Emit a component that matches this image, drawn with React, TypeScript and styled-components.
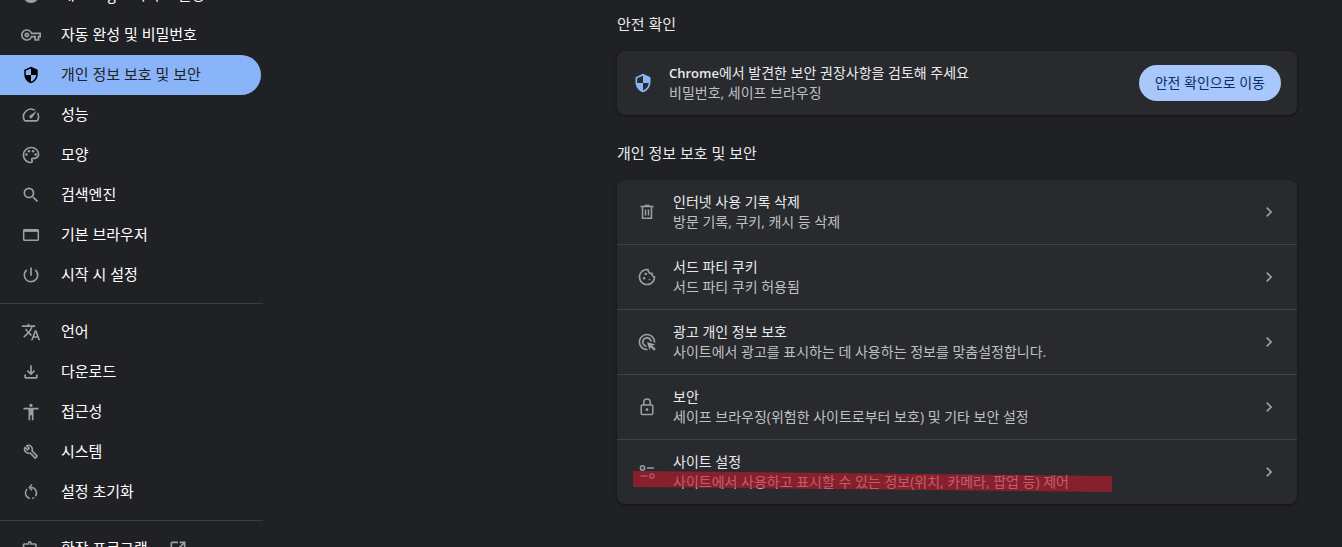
import React from 'react';
import styled, { createGlobalStyle } from 'styled-components';
import {
  MdOutlineVpnKey, MdSecurity, MdOutlinePalette, MdSearch, MdPowerSettingsNew, MdTranslate,
  MdOutlineFileDownload, MdAccessibility, MdOutlineExtension, MdOpenInNew,
  MdOutlineCookie, MdAdsClick, MdChevronRight, MdOutlineSpeed,
} from 'react-icons/md';

const GlobalStyle = createGlobalStyle`
  * { box-sizing: border-box; }
  body {
    margin: 0;
    background: #202124;
    color: #e8eaed;
    font-family: "Open Sans", "Noto Sans CJK KR", sans-serif;
    font-size: 14px;
    line-height: 20px;
  }
`;

const Page = styled.div`
  display: flex;
  justify-content: space-between;
  height: 100vh;
  overflow: hidden;
`;

const Sidebar = styled.nav`
  width: 263px;
  flex: none;
  margin-top: -25px;
`;

const NavGroup = styled.div`
  padding-bottom: 8px;
  & + & {
    border-top: 1px solid #3c3d40;
    padding-top: 8px;
  }
`;

const NavItem = styled.a<{ $selected?: boolean }>`
  display: flex;
  align-items: center;
  gap: 20px;
  height: 40px;
  margin-right: 2px;
  padding-left: 21px;
  border-radius: 0 20px 20px 0;
  background: ${p => (p.$selected ? '#8ab4f8' : 'transparent')};
  color: ${p => (p.$selected ? '#202124' : '#ffffff')};
  font-size: 15px;
  text-decoration: none;
  white-space: nowrap;
`;

const NavLabel = styled.span`
  padding-bottom: 2px;
`;

const IconSlot = styled.span<{ $color?: string }>`
  display: flex;
  flex: none;
  align-items: center;
  justify-content: center;
  width: 20px;
  height: 20px;
  color: ${p => p.$color ?? '#9aa0a6'};
`;

const Main = styled.main`
  flex: 0 1 680px;
  min-width: 0;
  margin-right: 45px;
  padding-top: 12px;
`;

const Section = styled.section`
  margin-bottom: 26px;
`;

const Heading = styled.h2`
  margin: 0 0 15px;
  font-size: 15px;
  font-weight: 400;
  line-height: 24px;
`;

const Card = styled.div`
  border-radius: 8px;
  background: #292a2d;
  box-shadow: 0 1px 2px rgba(0, 0, 0, 0.3), 0 1px 3px 1px rgba(0, 0, 0, 0.15);
`;

const SafetyRow = styled.div`
  display: flex;
  align-items: center;
  gap: 16px;
  height: 64px;
  padding: 0 16px;
`;

const SettingRow = styled.a`
  position: relative;
  display: flex;
  align-items: center;
  gap: 16px;
  height: 64px;
  padding: 0 18px 0 20px;
  color: inherit;
  text-decoration: none;
  & + & {
    height: 65px;
    border-top: 1px solid #414246;
  }
`;

const Labels = styled.div`
  flex: 1;
  min-width: 0;
`;

const Title = styled.div`
  color: #e8eaed;
`;

const Detail = styled.div`
  color: #bdc1c6;
`;

const Brand = styled.strong`
  font-size: 13px;
  font-weight: 600;
`;

const PillButton = styled.button`
  height: 36px;
  padding: 0 16px;
  border: 0;
  border-radius: 18px;
  background: #a8c7fa;
  color: #062e6f;
  font: inherit;
  white-space: nowrap;
`;

const Marker = styled.svg`
  position: absolute;
  left: 15px;
  top: 30px;
  width: 481px;
  height: 24px;
  pointer-events: none;
`;

const LineIcon = ({ children }: { children: React.ReactNode }) => (
  <svg width="20" height="20" viewBox="0 0 20 20" fill="none" stroke="currentColor" strokeWidth="1.5" aria-hidden="true">
    {children}
  </svg>
);

const GoogleIcon = () => (
  <LineIcon><circle cx="10" cy="10" r="8" fill="currentColor" stroke="none" /></LineIcon>
);
const WindowIcon = () => (
  <LineIcon>
    <rect x="2.7" y="4.7" width="14.6" height="10.6" rx="0.8" />
    <path d="M2.7 5.7h14.6" strokeWidth="2.4" />
  </LineIcon>
);
const WrenchIcon = () => (
  <LineIcon>
    <path d="M4 5.3 6.6 7.9 8.2 6.3 5.6 3.7A4 4 0 0 1 11 8.9l5.2 5.2-2 2L9 10.9A4 4 0 0 1 4 5.3z" strokeLinejoin="round" />
  </LineIcon>
);
const ResetIcon = () => (
  <LineIcon>
    <path d="M9.6 5.5a5.5 5.5 0 0 1 4.9 8.7M13.2 15.5a5.5 5.5 0 0 1-2 .9M8.8 16.4a5.5 5.5 0 0 1-4.2-6.6A5.5 5.5 0 0 1 6.2 7.1" />
    <path d="M11 2.6 8.3 5.4l2.7 2.8" />
  </LineIcon>
);
const TrashIcon = () => (
  <LineIcon>
    <path d="M3.5 4.5h13M7.5 3.6h5M5.5 4.5v11.8h9V4.5M8.5 7.5v6M11.5 7.5v6" />
  </LineIcon>
);
const LockIcon = () => (
  <LineIcon>
    <rect x="4.2" y="8" width="11.6" height="9.5" rx="1" />
    <path d="M6.8 8V5.2a3.2 3.2 0 0 1 6.4 0V8" />
    <circle cx="10" cy="12.7" r="1.4" fill="currentColor" stroke="none" />
  </LineIcon>
);
const TuneIcon = () => (
  <LineIcon>
    <circle cx="5.5" cy="5.9" r="2.1" />
    <path d="M10 5.9h7M3.5 14.1h7" />
    <circle cx="14.8" cy="14.1" r="2.1" />
  </LineIcon>
);

const primary = [
  { label: '내 Google 서비스 설정', icon: <GoogleIcon /> },
  { label: '자동 완성 및 비밀번호', icon: <MdOutlineVpnKey size={20} /> },
  { label: '개인 정보 보호 및 보안', icon: <MdSecurity size={18} />, selected: true },
  { label: '성능', icon: <MdOutlineSpeed size={20} /> },
  { label: '모양', icon: <MdOutlinePalette size={20} /> },
  { label: '검색엔진', icon: <MdSearch size={20} /> },
  { label: '기본 브라우저', icon: <WindowIcon /> },
  { label: '시작 시 설정', icon: <MdPowerSettingsNew size={20} /> },
];
const advanced = [
  { label: '언어', icon: <MdTranslate size={20} /> },
  { label: '다운로드', icon: <MdOutlineFileDownload size={20} /> },
  { label: '접근성', icon: <MdAccessibility size={20} /> },
  { label: '시스템', icon: <WrenchIcon /> },
  { label: '설정 초기화', icon: <ResetIcon /> },
];
const settings = [
  { title: '인터넷 사용 기록 삭제', detail: '방문 기록, 쿠키, 캐시 등 삭제', icon: <TrashIcon /> },
  { title: '서드 파티 쿠키', detail: '서드 파티 쿠키 허용됨', icon: <MdOutlineCookie size={20} /> },
  { title: '광고 개인 정보 보호', detail: '사이트에서 광고를 표시하는 데 사용하는 정보를 맞춤설정합니다.', icon: <MdAdsClick size={20} /> },
  { title: '보안', detail: '세이프 브라우징(위험한 사이트로부터 보호) 및 기타 보안 설정', icon: <LockIcon /> },
  { title: '사이트 설정', detail: '사이트에서 사용하고 표시할 수 있는 정보(위치, 카메라, 팝업 등) 제어', icon: <TuneIcon />, marked: true },
];

export default function App() {
  return (
    <>
      <GlobalStyle />
      <Page>
        <Sidebar>
          <NavGroup>
            {primary.map(i => (
              <NavItem key={i.label} href="#" $selected={i.selected}>
                <IconSlot $color={i.selected ? '#000000' : undefined}>{i.icon}</IconSlot>
                <NavLabel>{i.label}</NavLabel>
              </NavItem>
            ))}
          </NavGroup>
          <NavGroup>
            {advanced.map(i => (
              <NavItem key={i.label} href="#">
                <IconSlot>{i.icon}</IconSlot>
                <NavLabel>{i.label}</NavLabel>
              </NavItem>
            ))}
          </NavGroup>
          <NavGroup>
            <NavItem href="#">
              <IconSlot><MdOutlineExtension size={20} /></IconSlot>
              <NavLabel>확장 프로그램</NavLabel>
              <IconSlot><MdOpenInNew size={20} /></IconSlot>
            </NavItem>
          </NavGroup>
        </Sidebar>
        <Main>
          <Section>
            <Heading>안전 확인</Heading>
            <Card>
              <SafetyRow>
                <IconSlot $color="#8ab4f8"><MdSecurity size={20} /></IconSlot>
                <Labels>
                  <Title><Brand>Chrome</Brand>에서 발견한 보안 권장사항을 검토해 주세요</Title>
                  <Detail>비밀번호, 세이프 브라우징</Detail>
                </Labels>
                <PillButton type="button">안전 확인으로 이동</PillButton>
              </SafetyRow>
            </Card>
          </Section>
          <Section>
            <Heading>개인 정보 보호 및 보안</Heading>
            <Card>
              {settings.map(s => (
                <SettingRow key={s.title} href="#">
                  <IconSlot>{s.icon}</IconSlot>
                  <Labels>
                    <Title>{s.title}</Title>
                    <Detail>{s.detail}</Detail>
                  </Labels>
                  <IconSlot><MdChevronRight size={20} /></IconSlot>
                  {s.marked && (
                    <Marker viewBox="0 0 481 24" aria-hidden="true">
                      <path d="M1 1 480 6v16L1 17z" fill="#c71b2d" fillOpacity="0.6" />
                    </Marker>
                  )}
                </SettingRow>
              ))}
            </Card>
          </Section>
        </Main>
      </Page>
    </>
  );
}
